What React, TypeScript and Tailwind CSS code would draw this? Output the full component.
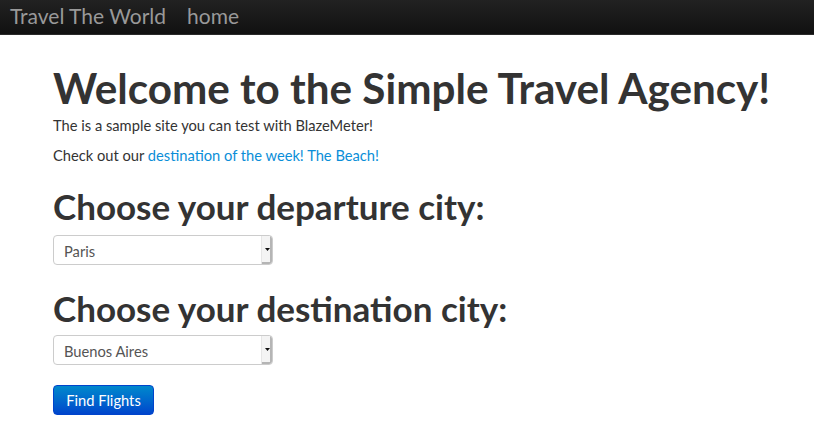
import React from "react";

function FakeSelect({ value }: { value: string }) {
  return (
    <div className="flex h-[30px] w-[220px] items-stretch overflow-hidden rounded-[4px] border border-[#cccccc] bg-white">
      <div className="flex flex-1 items-center pl-[10px] pt-[2px] text-[14.7px] text-[#555555]">
        {value}
      </div>
      <div className="flex w-[11px] items-center justify-center border-l border-[#e6e6e6] bg-[#f4f4f4] shadow-[inset_-2px_-2px_0_#b5b5b5]">
        <svg width="5" height="3" viewBox="0 0 5 3" className="mb-[2px]">
          <path d="M0 0h5L2.5 3z" fill="#111" />
        </svg>
      </div>
    </div>
  );
}

export default function App() {
  return (
    <div className="min-h-screen bg-white font-['Lato','Liberation_Sans',sans-serif] text-[#333333]">
      {/* navbar */}
      <div className="h-[35px] border-b border-[#2a2a2a] bg-gradient-to-b from-[#222222] to-[#111111]">
        <div className="flex h-[34px] items-center pb-[3px] pl-[10px] text-[21px] text-[#999999]">
          <span>Travel The World</span>
          <span className="ml-[21px]">home</span>
        </div>
      </div>

      <div className="pl-[53px]">
        <h1 className="mt-[31px] text-[42.2px] font-bold leading-[44px] text-[#333333]">
          Welcome to the Simple Travel Agency!
        </h1>
        <p className="mt-[5px] text-[14.7px] leading-[20px]">
          The is a sample site you can test with BlazeMeter!
        </p>
        <p className="mt-[10px] text-[14.7px] leading-[20px]">
          Check out our{" "}
          <a href="#" className="text-[#0a8ed8]">
            destination of the week! The Beach!
          </a>
        </p>

        <h2 className="mt-[19px] text-[35px] font-bold leading-[44px]">
          Choose your departure city:
        </h2>
        <div className="mt-[7px]">
          <FakeSelect value="Paris" />
        </div>

        <h2 className="mt-[21px] text-[35px] font-bold leading-[44px]">
          Choose your destination city:
        </h2>
        <div className="mt-[5px]">
          <FakeSelect value="Buenos Aires" />
        </div>

        <button className="mt-[20px] h-[30px] w-[101px] rounded-[4px] border border-[#0044cc] bg-gradient-to-b from-[#0088cc] to-[#0044cc] text-[14.7px] text-white">
          Find Flights
        </button>
      </div>
    </div>
  );
}
